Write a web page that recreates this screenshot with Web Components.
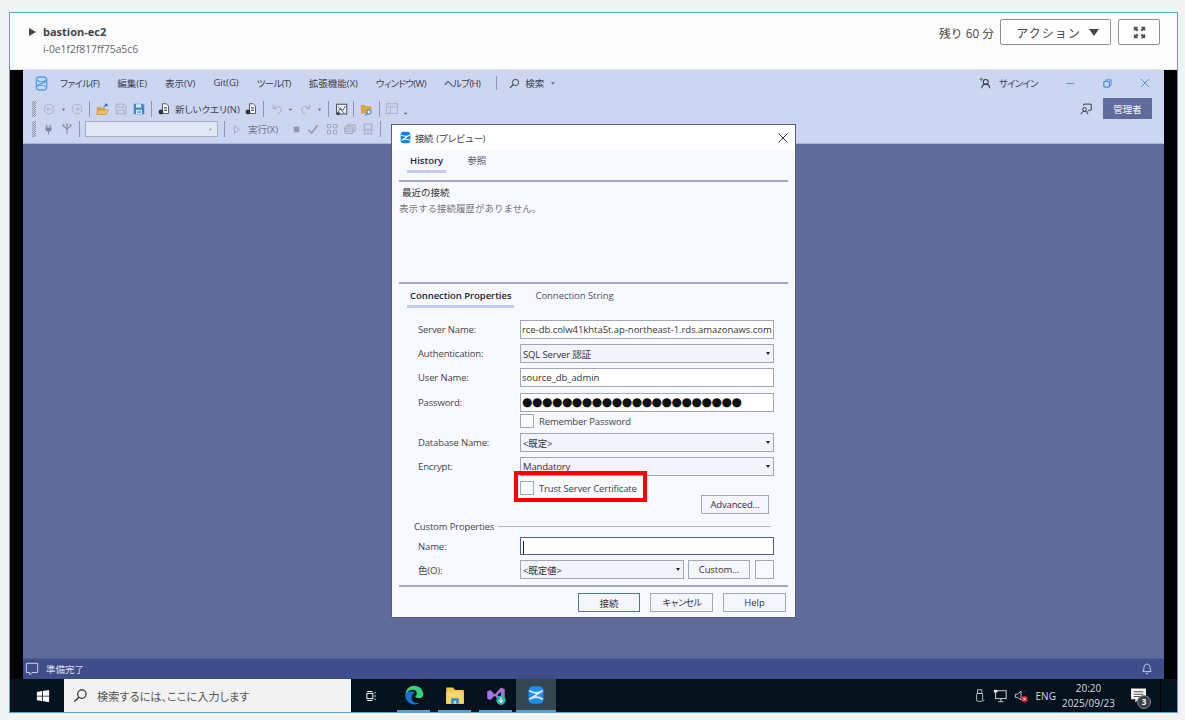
<!DOCTYPE html>
<html lang="ja">
<head>
<meta charset="utf-8">
<title>bastion-ec2</title>
<style>
  html, body { margin: 0; height: 720px; overflow: hidden; background: #f2f4f4; }
  body { font-family: "Open Sans", "Noto Sans CJK JP", sans-serif; font-size: 9.5px; color: #333; font-feature-settings: "palt"; }
</style>
</head>
<body>
<session-frame>
  <session-header name="bastion-ec2" instance="i-0e1f2f817ff75a5c6" remaining="残り 60 分"></session-header>
  <remote-desktop>
    <ads-window>
      <connect-dialog></connect-dialog>
      <mark-box></mark-box>
    </ads-window>
    <win-taskbar slot="taskbar"></win-taskbar>
  </remote-desktop>
</session-frame>

<script>
// icons, all on a 16x16 box unless the tag says otherwise
const ICONS = {
  back: '<circle cx="8" cy="8" r="6.5" fill="none" stroke="#a6adc6" stroke-width="1.2"/><path d="M11.5 8H5M7.5 5.5 5 8l2.5 2.5" fill="none" stroke="#a6adc6" stroke-width="1.2"/>',
  forward: '<circle cx="8" cy="8" r="6.5" fill="none" stroke="#a6adc6" stroke-width="1.2"/><path d="M4.5 8H11M8.5 5.5 11 8l-2.500 2.500" fill="none" stroke="#a6adc6" stroke-width="1.2"/>',
  caret: '<path d="M4 6.500h8L8 11z" fill="#5b6174"/>',
  caretGray: '<path d="M4 6.500h8L8 11z" fill="#9aa0b4"/>',
  open: '<path d="M1 5h5l1 1.500h5V14H1z" fill="#d9a441"/><path d="M3 8.500h12L12.500 14H1z" fill="#eec06a" stroke="#c68f2c" stroke-width=".8"/><path d="M9 5.500 13.500 1.500M11 1.500h2.700v2.700" fill="none" stroke="#2f78c4" stroke-width="1.300"/>',
  save: '<path d="M1.500 1.500h11l2 2v11h-13z M4 1.500v4.500h7V1.500 M4 14.500V9.500h8v5" fill="none" stroke="#a8afc8" stroke-width="1.200"/>',
  saveAll: '<path d="M1 1h12l2 2v12H1z" fill="#3a8ac9"/><path d="M4 1.500h7v4.500H4z M4 9h8v5.500H4z" fill="#dfe9f6"/><path d="M5.500 11h5M5.500 12.800h5" stroke="#3a8ac9"/>',
  newQuery: '<path d="M6 1h5l3 3v10H6z" fill="#fff" stroke="#3a3f4c" stroke-width="1.100"/><path d="M8 6h4M8 8h4M8 10h4" stroke="#3a3f4c"/><ellipse cx="4" cy="12" rx="3.300" ry="3.300" fill="#30343f"/>',
  undo: '<path d="M3 2.500v5h5M3.500 7.500C6 3.500 13.500 4 13.500 9c0 2.500-2 4.500-5 5.500" fill="none" stroke="#a3aac4" stroke-width="1.300"/>',
  redo: '<path d="M13 2.500v5H8M12.500 7.500C10 3.500 2.500 4 2.500 9c0 2.500 2 4.500 5 5.500" fill="none" stroke="#a3aac4" stroke-width="1.300"/>',
  report: '<rect x="2" y="1.500" width="12.500" height="12" fill="#eef1fa" stroke="#333a48" stroke-width="1.100"/><path d="M4 11l3-4.500 2.500 2.500L13 3.500M3.500 4.500l8 8" fill="none" stroke="#333a48"/><circle cx="4" cy="13" r="2" fill="#333a48"/>',
  folderFind: '<path d="M1 2.500h5l1.300 1.500H14v9H1z" fill="#d9a441"/><circle cx="11" cy="11" r="2.600" fill="#eaf2fb" stroke="#2f78c4" stroke-width="1.200"/><path d="M9 13l-2.500 2.500" stroke="#2f78c4" stroke-width="1.400"/>',
  panel: '<rect x="1.500" y="2" width="13" height="11" fill="none" stroke="#a8afc8" stroke-width="1.100"/><path d="M1.500 5.500h13M6 5.500V13" stroke="#a8afc8"/>',
  plug: '<path d="M5.500 1v4M10.500 1v4" stroke="#7f87a0" stroke-width="1.500"/><path d="M3.500 5h9v3.500L10 11H6L3.500 8.500z" fill="#7f87a0"/><path d="M8 11v4" stroke="#7f87a0" stroke-width="1.500"/>',
  fork: '<path d="M8 15V8M8 8 3 4M8 8l5-4M8 8V3" fill="none" stroke="#8a91aa" stroke-width="1.500"/><circle cx="3" cy="3" r="1.500" fill="#8a91aa"/><circle cx="13" cy="3" r="1.500" fill="#8a91aa"/><circle cx="8" cy="2" r="1.500" fill="#8a91aa"/>',
  play: '<path d="M5 2.500 12 8l-7 5.500z" fill="none" stroke="#9aa1ba" stroke-width="1.200"/>',
  stop: '<rect x="4" y="4" width="8" height="8" fill="#8f96ae"/>',
  check: '<path d="M2 9l4 4.500L14 3" fill="none" stroke="#8f96ae" stroke-width="2"/>',
  plan: '<path d="M2 2h4.500v4.500H2zM10 2h4.500v4.500H10zM2 10h4.500v4.500H2zM10 10h4.500v4.500H10z" fill="none" stroke="#9aa1ba" stroke-width="1.200"/>',
  grid: '<rect x="1" y="5" width="11" height="9" rx="1" fill="none" stroke="#9aa1ba" stroke-width="1.200"/><path d="M4 5V2.500h11V11h-3M1 8h11M1 11h11" fill="none" stroke="#9aa1ba" stroke-width="1.200"/>',
  sheet: '<rect x="3" y="1.500" width="10" height="13" fill="none" stroke="#9aa1ba" stroke-width="1.200"/><path d="M3 8.500h10M6 11.500h4" stroke="#9aa1ba" stroke-width="1.200"/>',
  search: '<circle cx="9.500" cy="6.500" r="4.500" fill="none" stroke="#333" stroke-width="1.300"/><path d="M6.200 9.800 1.500 14.500" stroke="#333" stroke-width="1.500"/>',
  signIn: '<circle cx="9" cy="6.500" r="3.300" fill="none" stroke="#333a48" stroke-width="1.400"/><path d="M3.500 15c.5-3.500 2.500-5.500 5.500-5.500s5 2 5.500 5.500" fill="none" stroke="#333a48" stroke-width="1.400"/><path d="M3 .500v5M.500 3h5" stroke="#3f9a52" stroke-width="1.400"/>',
  minimize: '<path d="M1 8h14" stroke="#4a94d8" stroke-width="1.800"/>',
  restore: '<rect x="1.500" y="4.500" width="10" height="10" rx="1" fill="none" stroke="#3c8fdc" stroke-width="2"/><path d="M5 4V1.500h9.500V11H12" fill="none" stroke="#3c8fdc" stroke-width="1.600"/>',
  close: '<path d="M1.500 1.500l13 13M14.500 1.500l-13 13" stroke="#4a94d8" stroke-width="1.500"/>',
  closeDark: '<path d="M2 2l12 12M14 2 2 14" stroke="#333" stroke-width="1.300"/>',
  feedback: '<circle cx="6" cy="8.500" r="2.500" fill="none" stroke="#333a48" stroke-width="1.300"/><path d="M1.500 15c.4-2.500 2-3.800 4.500-3.800s4.100 1.300 4.500 3.800M5 3.500V1.500h10v8h-3l-2 2" fill="none" stroke="#333a48" stroke-width="1.300"/>',
  expand: '<path d="M1 1h5.500L5 2.800 6.800 4.600 4.600 6.800 2.800 5 1 6.500zM15 1v5.500L13.200 5l-1.800 1.800-2.200-2.200L11 2.800 9.500 1zM1 15V9.500L2.800 11l1.800-1.800 2.200 2.200L5 13.200 6.500 15zM15 15H9.500L11 13.200l-1.800-1.800 2.200-2.200 1.800 1.800L15 9.500z" fill="#555"/>',
  comment: '<path d="M1.500 1.500h13v10.500H8L5.500 14.500V12h-4z" fill="none" stroke="#dbe0f2" stroke-width="1"/>',
  bell: '<path d="M8 1.500c-2.800 0-4 2-4 4.500 0 3-1.500 5-1.500 5.500h11C13.500 11 12 9 12 6c0-2.500-1.200-4.500-4-4.500zM6.500 13.500c.4 1 2.600 1 3 0" fill="none" stroke="#e4e8f6" stroke-width="1.100"/>',
  logoLine: '<rect x="2.500" y="1" width="11" height="14" rx="3.500" fill="none" stroke="#56a0e6" stroke-width="1.500"/><path d="M3 4.500C6 6.500 10 6.500 13 4.500M3 11.500C6 9.500 10 9.500 13 11.500M3.500 10 12.500 6" fill="none" stroke="#56a0e6" stroke-width="1.200"/>',
  logoFill: '<rect x="2" y="1" width="12" height="14" rx="3.500" fill="#1583e6"/><path d="M2.500 4.800C6 6.800 10 6.800 13.500 4.800L3 11.500c3.500-1.800 7-1.800 10.500 0" fill="none" stroke="#fff" stroke-width="1.300"/>',
  start: '<path d="M1 3.300 6.800 2.400V7.600H1zM7.800 2.300 15 1.200V7.600H7.800zM1 8.600H6.800V13.700L1 12.800zM7.800 8.600H15V15L7.800 13.800z" fill="#fff"/>',
  taskView: '<path d="M3 2h7M3 14h7" stroke="#fff" stroke-width="1.300"/><rect x="2.500" y="4.500" width="8" height="7" fill="none" stroke="#fff" stroke-width="1.300"/><path d="M13.500 2.500v2M13.500 7v2M13.500 11.500v2" stroke="#fff" stroke-width="1.300"/>',
  edge: '<path d="M8 .500c4.500 0 7.500 3.200 7.500 7 0 1.800-1.500 3-3.500 3-2.500 0-3-1-3-1.500 1-.5 1.500-1.500 1-3C10 3.500 6 3 3.500 5 1.500 6.500 1 9 1.500 6 2 3 4.500.500 8 .500z" fill="#3ccf7a"/><path d="M1 8c0 4.500 3.500 7.500 7.500 7.500 1.500 0 3-.5 4-1.300-3 .8-6.500-.3-6.500-4 0-2 1.300-3.700 3-4.200C5.500 4.500 1 5 1 8z" fill="#1476d2"/>',
  explorer: '<path d="M1 2h5.500L8 4h7v11H1z" fill="#f3c94a"/><path d="M1 5.500h14V15H1z" fill="#f7d96b"/><path d="M5 15v-4.500h6V15h-2v-2.500H7V15z" fill="#2b87d8"/>',
  vs: '<path d="M1 5 3.500 4 7 7.500 12 2l3 1.300v9.400L12 14 7 8.500 3.500 12 1 11z" fill="#a276d9"/><path d="M12 5.500 9 8l3 2.500z" fill="#04141f"/><circle cx="12" cy="12.200" r="3.700" fill="#27b6a3"/><path d="M12 10v3.500M10.500 12.300 12 14l1.500-1.700" fill="none" stroke="#fff" stroke-width=".9"/>',
  ads: '<rect x="2" y="1" width="12" height="14" rx="3.500" fill="#1e8cf0"/><path d="M2.500 4.500C6 6.800 10 6.800 13.500 4.500L2.500 11.500C6 9.200 10 9.200 13.500 11.500" fill="none" stroke="#dff0ff" stroke-width="1.300"/>',
  usb: '<rect x="4.500" y="1" width="6" height="4" fill="none" stroke="#cfd3da"/><rect x="3.500" y="5" width="8" height="9" rx="1" fill="none" stroke="#cfd3da"/><path d="M12 14l2-1.500" stroke="#cfd3da"/>',
  network: '<rect x="3" y="2" width="12" height="9" fill="none" stroke="#e8e8e8"/><path d="M9 11v3M6 14.500h6" stroke="#e8e8e8"/><rect x="1" y="1" width="4" height="3" fill="#e8e8e8"/>',
  muted: '<path d="M1.500 6h2.500l4-3.500v10L4 9.500H1.500z" fill="none" stroke="#d6d8de"/><circle cx="12" cy="11.500" r="3.600" fill="#e0232e"/><path d="M10.500 10l3 3M13.500 10l-3 3" stroke="#fff"/>',
  note: '<path d="M1 1.500h14v10H8l-3 3v-3H1z" fill="#f5f5f5"/><path d="M3.500 4.500h9M3.500 6.800h9M3.500 9h6" stroke="#555"/>'
};

class UiIcon extends HTMLElement {
  connectedCallback() {
    const size = this.getAttribute('size') || 12;
    const w = this.getAttribute('w') || size;
    const name = this.getAttribute('name');
    this.attachShadow({ mode: 'open' }).innerHTML = `
      <style>:host { display: inline-flex; flex: none; width: ${w}px; height: ${size}px; } svg { display: block; }</style>
      <svg width="${w}" height="${size}" viewBox="0 0 16 16" preserveAspectRatio="none">${ICONS[name] || ''}</svg>`;
  }
}
customElements.define('ui-icon', UiIcon);

class SessionFrame extends HTMLElement {
  constructor() {
    super();
    this.attachShadow({ mode: 'open' }).innerHTML = `
      <style>
        :host {
          display: flex; flex-direction: column; box-sizing: border-box;
          width: 1169px; height: 701px; margin: 12px 0 0 9px;
          border: 1px solid #5aa4cc; background: #fff;
        }
      </style>
      <slot></slot>`;
  }
}
customElements.define('session-frame', SessionFrame);

class SessionHeader extends HTMLElement {
  connectedCallback() {
    this.attachShadow({ mode: 'open' }).innerHTML = `
      <style>
        :host { display: flex; align-items: flex-start; height: 56px; background: #fcfcfc; flex: none; }
        .arrow { width: 0; height: 0; margin: 15px 0 0 19px; border-left: 7px solid #444; border-top: 4px solid transparent; border-bottom: 4px solid transparent; }
        .names { margin: 11px 0 0 7px; }
        .name { font: 700 11px/16px "Open Sans", sans-serif; color: #444; }
        .id { font: 10.300px/14px "Open Sans", sans-serif; color: #666; margin-top: 2px; }
        .right { margin-left: auto; display: flex; align-items: center; margin-top: 6px; margin-right: 17px; }
        .left { font: 11.800px "Open Sans", "Noto Sans CJK JP", sans-serif; color: #444; margin-right: 6px; }
        button {
          box-sizing: border-box; height: 26px; background: #fff; border: 1px solid #8c9096; border-radius: 2px;
          font: 12px "Noto Sans CJK JP", sans-serif; color: #444; display: flex; align-items: center; justify-content: center; padding: 0;
        }
        .action { width: 111px; letter-spacing: 1px; gap: 8px; padding-left: 4px; }
        .action i { width: 0; height: 0; border-top: 7px solid #444; border-left: 5px solid transparent; border-right: 5px solid transparent; }
        .full { width: 42px; margin-left: 7px; }
      </style>
      <div class="arrow"></div>
      <div class="names">
        <div class="name">${this.getAttribute('name')}</div>
        <div class="id">${this.getAttribute('instance')}</div>
      </div>
      <div class="right">
        <span class="left">${this.getAttribute('remaining')}</span>
        <button class="action">アクション<i></i></button>
        <button class="full"><ui-icon name="expand" size="13"></ui-icon></button>
      </div>`;
  }
}
customElements.define('session-header', SessionHeader);

class RemoteDesktop extends HTMLElement {
  constructor() {
    super();
    this.attachShadow({ mode: 'open' }).innerHTML = `
      <style>
        :host { display: flex; flex-direction: column; flex: 1; background: #000; min-height: 0; border-top: 1px solid #e4e6ea; }
        .main { flex: 1; padding: 0 13px; min-height: 0; display: flex; }
      </style>
      <div class="main"><slot></slot></div>
      <slot name="taskbar"></slot>`;
  }
}
customElements.define('remote-desktop', RemoteDesktop);

class AdsToolbar extends HTMLElement {
  constructor() {
    super();
    this.attachShadow({ mode: 'open' }).innerHTML = `
      <style>
        :host { display: flex; align-items: center; height: 20px; padding-left: 9px; }
        .grip { width: 4px; height: 16px; flex: none; background: repeating-conic-gradient(#8a91ab 0 25%, transparent 0 50%) 0 0 / 2px 2px; }
      </style>
      <div class="grip"></div><slot></slot>`;
  }
}
customElements.define('ads-toolbar', AdsToolbar);

class TbSep extends HTMLElement {
  constructor() {
    super();
    this.attachShadow({ mode: 'open' }).innerHTML = `<style>:host { display: block; flex: none; width: 1px; height: 16px; background: #8f97b4; }</style>`;
  }
}
customElements.define('tb-sep', TbSep);

class AdsWindow extends HTMLElement {
  constructor() {
    super();
    this.attachShadow({ mode: 'open' }).innerHTML = `
      <style>
        :host { display: flex; flex-direction: column; flex: 1; position: relative; background: #5f6b9a; }
        header { background: #ccd6f0; height: 74px; flex: none; border-bottom: 1px solid #a9b4d6; box-sizing: border-box; color: #3a4052; }
        .top { display: flex; align-items: center; height: 26px; padding-left: 11px; }
        .menu { display: flex; gap: 18px; margin-left: 11px; white-space: nowrap; }
        .menu .k { letter-spacing: -.6px; }
        .find { display: flex; align-items: center; margin-left: 16px; gap: 5px; }
        .find::before { content: ""; width: 1px; height: 14px; background: #8f97b4; margin-right: 7px; }
        .win { margin-left: auto; display: flex; align-items: center; padding-right: 14px; }
        .win span { width: 40px; margin: 0 27px 0 8px; white-space: nowrap; letter-spacing: -.8px; }
        .win ui-icon + ui-icon { margin-left: 28px; }
        .admin-row { position: absolute; top: 28px; right: 12px; display: flex; align-items: center; gap: 11px; }
        .admin { width: 49px; height: 21px; background: #5f6b9a; color: #fff; display: flex; align-items: center; justify-content: center; }
        .tools { margin-top: 3px; }
        .t { color: #3a4052; white-space: nowrap; }
        .combo { flex: none; box-sizing: border-box; width: 133px; height: 16px; background: #e2e7f5; border: 1px solid #a8aec0; display: flex; align-items: center; justify-content: flex-end; padding-right: 3px; }
        main { flex: 1; }
        footer { flex: none; height: 21px; background: #3f4d8a; color: #d8dcef; display: flex; align-items: center; padding: 0 11px 0 2px; border-top: 1px solid #525f96; box-sizing: border-box; }
        footer span { margin-left: 7px; }
        footer ui-icon:last-child { margin-left: auto; }
      </style>
      <header>
        <div class="top">
          <ui-icon name="logoLine" size="15"></ui-icon>
          <nav class="menu"><span class="k">ファイル(F)</span><span>編集(E)</span><span>表示(V)</span><span>Git(G)</span><span class="k">ツール(T)</span><span>拡張機能(X)</span><span class="k">ウィンドウ(W)</span><span class="k">ヘルプ(H)</span></nav>
          <div class="find"><ui-icon name="search" size="11"></ui-icon><span>検索</span><ui-icon name="caret" size="8"></ui-icon></div>
          <div class="win">
            <ui-icon name="signIn" size="12"></ui-icon><span>サインイン</span>
            <ui-icon name="minimize" size="9"></ui-icon><ui-icon name="restore" size="9"></ui-icon><ui-icon name="close" size="10"></ui-icon>
          </div>
        </div>
        <div class="admin-row"><ui-icon name="feedback" size="12"></ui-icon><div class="admin">管理者</div></div>
        <ads-toolbar class="tools">
          <ui-icon name="back" style="margin-left:7px"></ui-icon>
          <ui-icon name="caret" size="7" style="margin-left:5px"></ui-icon>
          <ui-icon name="forward" style="margin-left:4px"></ui-icon>
          <tb-sep style="margin-left:6px"></tb-sep>
          <ui-icon name="open" size="13" style="margin-left:6px"></ui-icon>
          <ui-icon name="save" style="margin-left:6px"></ui-icon>
          <ui-icon name="saveAll" style="margin-left:6px"></ui-icon>
          <tb-sep style="margin-left:6px"></tb-sep>
          <ui-icon name="newQuery" style="margin-left:6px"></ui-icon>
          <span class="t" style="margin-left:5px;width:60px">新しいクエリ(N)</span>
          <ui-icon name="newQuery" style="margin-left:10px"></ui-icon>
          <tb-sep style="margin-left:6px"></tb-sep>
          <ui-icon name="undo" style="margin-left:7px"></ui-icon>
          <ui-icon name="caret" size="7" style="margin-left:4px"></ui-icon>
          <ui-icon name="redo" style="margin-left:6px"></ui-icon>
          <ui-icon name="caret" size="7" style="margin-left:4px"></ui-icon>
          <tb-sep style="margin-left:5px"></tb-sep>
          <ui-icon name="report" size="13" style="margin-left:6px"></ui-icon>
          <tb-sep style="margin-left:5px"></tb-sep>
          <ui-icon name="folderFind" size="13" style="margin-left:6px"></ui-icon>
          <tb-sep style="margin-left:6px"></tb-sep>
          <ui-icon name="panel" size="14" style="margin-left:5px"></ui-icon>
          <ui-icon name="caret" size="7" style="margin-left:3px;margin-top:8px"></ui-icon>
        </ads-toolbar>
        <ads-toolbar>
          <ui-icon name="plug" size="11" style="margin-left:7px"></ui-icon>
          <ui-icon name="fork" size="12" style="margin-left:7px"></ui-icon>
          <tb-sep style="margin-left:6px"></tb-sep>
          <div class="combo" style="margin-left:5px"><ui-icon name="caretGray" size="7"></ui-icon></div>
          <tb-sep style="margin-left:6px"></tb-sep>
          <ui-icon name="play" size="11" style="margin-left:6px"></ui-icon>
          <span class="t" style="margin-left:6px;color:#6c7288;width:33px">実行(X)</span>
          <ui-icon name="stop" size="11" style="margin-left:10px"></ui-icon>
          <ui-icon name="check" size="12" style="margin-left:5px"></ui-icon>
          <ui-icon name="plan" size="12" style="margin-left:7px"></ui-icon>
          <ui-icon name="grid" size="12" style="margin-left:6px"></ui-icon>
          <ui-icon name="sheet" size="12" style="margin-left:6px"></ui-icon>
          <tb-sep style="margin-left:6px"></tb-sep>
        </ads-toolbar>
      </header>
      <main><slot></slot></main>
      <footer><ui-icon name="comment" size="14"></ui-icon><span>準備完了</span><ui-icon name="bell" size="12"></ui-icon></footer>`;
  }
}
customElements.define('ads-window', AdsWindow);

class TabStrip extends HTMLElement {
  connectedCallback() {
    const tabs = this.getAttribute('tabs').split('|');
    this.attachShadow({ mode: 'open' }).innerHTML = `
      <style>
        :host { display: flex; gap: 18px; padding-left: 15px; flex: none; }
        div { box-sizing: border-box; padding: 0 3px; color: #4a4f5e; white-space: nowrap; line-height: 20px; }
        .on { color: #1f2430; font-weight: 600; border-bottom: 3px solid #c2caf2; height: 22px; }
      </style>
      ${tabs.map((t, i) => `<div class="${i === 0 ? 'on' : ''}">${t}</div>`).join('')}`;
  }
}
customElements.define('tab-strip', TabStrip);

class FormRow extends HTMLElement {
  connectedCallback() {
    this.attachShadow({ mode: 'open' }).innerHTML = `
      <style>
        :host { display: grid; grid-template-columns: 102px 254px; align-items: center; padding-left: 26px; }
        label { color: #444; white-space: nowrap; }
      </style>
      <label>${this.getAttribute('label') || ''}</label><slot></slot>`;
  }
}
customElements.define('form-row', FormRow);

class TextField extends HTMLElement {
  connectedCallback() {
    this.attachShadow({ mode: 'open' }).innerHTML = `
      <style>
        :host { display: block; box-sizing: border-box; height: 19px; border: 1px solid #a3a7b5; background: #fff; overflow: hidden; }
        :host([kind="focus"]) { border-color: #4f5f96; height: 18px; }
        .v { display: block; padding-left: 1px; line-height: 17px; color: #333; white-space: nowrap; letter-spacing: -.04px; }
        :host([kind="dots"]) .v { font: 12px/16px "DejaVu Sans", sans-serif; color: #111; letter-spacing: -.500px; }
        :host([kind="focus"]) .v::before { content: ""; display: inline-block; width: 1px; height: 13px; background: #222; vertical-align: middle; margin-left: 1px; }
      </style>
      <span class="v">${this.getAttribute('value') || ''}</span>`;
  }
}
customElements.define('text-field', TextField);

class DropDown extends HTMLElement {
  connectedCallback() {
    this.attachShadow({ mode: 'open' }).innerHTML = `
      <style>
        :host { display: flex; align-items: center; box-sizing: border-box; height: 19px; border: 1px solid #a3a7b5; background: #f1f4fb; padding: 0 3px 0 2px; }
        span { flex: 1; color: #333; white-space: nowrap; }
        i { width: 0; height: 0; border-top: 3px solid #222; border-left: 2.500px solid transparent; border-right: 2.500px solid transparent; }
      </style>
      <span>${this.getAttribute('value') || ''}</span><i></i>`;
  }
}
customElements.define('drop-down', DropDown);

class CheckBox extends HTMLElement {
  connectedCallback() {
    this.attachShadow({ mode: 'open' }).innerHTML = `
      <style>
        :host { display: flex; align-items: center; gap: 5px; color: #444; white-space: nowrap; }
        i { box-sizing: border-box; width: 14px; height: 14px; border: 1px solid #a3a7b5; background: #fbfcff; }
      </style>
      <i></i><span>${this.getAttribute('label')}</span>`;
  }
}
customElements.define('check-box', CheckBox);

class DlgButton extends HTMLElement {
  connectedCallback() {
    this.attachShadow({ mode: 'open' }).innerHTML = `
      <style>
        :host { display: flex; align-items: center; justify-content: center; box-sizing: border-box; height: 19px; border: 1px solid #a3a7b5; background: #f4f6fc; color: #333; flex: none; white-space: nowrap; }
        :host([primary]) { border-color: #4a78a8; }
      </style>
      <slot></slot>`;
  }
}
customElements.define('dlg-button', DlgButton);

class ConnectDialog extends HTMLElement {
  constructor() {
    super();
    this.attachShadow({ mode: 'open' }).innerHTML = `
      <style>
        /* a window lying over the app, so it keeps its own place */
        :host {
          position: absolute; left: 368px; top: 54px; width: 405px; height: 494px; box-sizing: border-box;
          display: flex; flex-direction: column; background: #f8f9fe; border: 1px solid #555e80;
          font: 9.500px "Open Sans", "Noto Sans CJK JP", sans-serif; color: #333;
        }
        .title { height: 25px; flex: none; background: #fff; display: flex; align-items: center; padding: 0 6px 0 7px; color: #3a3f4c; }
        .title span { margin-left: 3px; letter-spacing: -.7px; word-spacing: 2px; }
        .title ui-icon:last-child { margin-left: auto; }
        .rule { flex: none; height: 2px; margin: 0 7px; background: #a3a9bf; }
        .recent { height: 100px; flex: none; box-sizing: border-box; padding: 3px 7px 0; line-height: 16px; }
        .recent b { display: block; font-weight: 400; color: #333; margin-left: 3px; }
        .recent p { margin: 0; color: #777; }
        .form { display: flex; flex-direction: column; padding-top: 12px; letter-spacing: -.15px; }
        .tabs1 { margin-top: 1px; height: 29px; }
        .tabs2 { margin-top: 2px; height: 22px; letter-spacing: -.05px; }
        .gap5 { margin-top: 5px; }
        .adv { display: flex; justify-content: flex-end; padding-right: 26px; }
        .legend { display: flex; align-items: center; gap: 4px; padding-left: 22px; padding-right: 24px; margin-top: 5px; height: 14px; color: #444; }
        .legend::after { content: ""; flex: 1; height: 1px; background: #b4b8c6; }
        .color { display: flex; gap: 4px; }
        .color drop-down { flex: none; width: 164px; }
        .swatch { box-sizing: border-box; width: 20px; height: 19px; border: 1px solid #a3a7b5; background: #f8f9fe; margin-left: 1px; }
        .actions { display: flex; justify-content: flex-end; gap: 10px; padding: 6px 9px 0 0; }
        .narrow { font-size: 9px; letter-spacing: -1.300px; }
      </style>
      <div class="title"><ui-icon name="logoFill" size="13"></ui-icon><span>接続 (プレビュー)</span><ui-icon name="closeDark" size="12"></ui-icon></div>
      <tab-strip class="tabs1" tabs="History|参照"></tab-strip>
      <div class="rule"></div>
      <div class="recent"><b>最近の接続</b><p>表示する接続履歴がありません。</p></div>
      <div class="rule"></div>
      <tab-strip class="tabs2" tabs="Connection Properties|Connection String"></tab-strip>
      <div class="form">
        <form-row label="Server Name:"><text-field value="rce-db.colw41khta5t.ap-northeast-1.rds.amazonaws.com"></text-field></form-row>
        <form-row label="Authentication:" class="gap5"><drop-down value="SQL Server 認証"></drop-down></form-row>
        <form-row label="User Name:" class="gap5"><text-field value="source_db_admin"></text-field></form-row>
        <form-row label="Password:" style="margin-top:6px"><text-field kind="dots" value="●●●●●●●●●●●●●●●●●●●●●●"></text-field></form-row>
        <form-row style="margin-top:2px"><check-box label="Remember Password"></check-box></form-row>
        <form-row label="Database Name:" class="gap5"><drop-down value="&lt;既定&gt;"></drop-down></form-row>
        <form-row label="Encrypt:" class="gap5"><drop-down value="Mandatory"></drop-down></form-row>
        <form-row class="gap5" style="height:14px"><check-box label="Trust Server Certificate"></check-box></form-row>
        <div class="adv"><dlg-button style="width:68px">Advanced...</dlg-button></div>
        <div class="legend">Custom Properties</div>
        <form-row label="Name:" style="margin-top:4px"><text-field kind="focus"></text-field></form-row>
        <form-row label="色(O):" class="gap5">
          <div class="color"><drop-down value="&lt;既定値&gt;"></drop-down><dlg-button style="width:62px">Custom...</dlg-button><div class="swatch"></div></div>
        </form-row>
      </div>
      <div class="rule" style="margin-top:6px"></div>
      <div class="actions">
        <dlg-button primary style="width:62px">接続</dlg-button>
        <dlg-button class="narrow" style="width:63px">キャンセル</dlg-button>
        <dlg-button style="width:63px">Help</dlg-button>
      </div>`;
  }
}
customElements.define('connect-dialog', ConnectDialog);

// red call-out drawn over the dialog
class MarkBox extends HTMLElement {
  constructor() {
    super();
    this.attachShadow({ mode: 'open' }).innerHTML = `
      <style>:host { position: absolute; left: 491px; top: 401px; width: 133px; height: 31px; box-sizing: border-box; border: 4px solid #f00; }</style>`;
  }
}
customElements.define('mark-box', MarkBox);

class TaskApp extends HTMLElement {
  connectedCallback() {
    const active = this.hasAttribute('active');
    this.attachShadow({ mode: 'open' }).innerHTML = `
      <style>
        :host { display: flex; align-items: center; justify-content: center; flex: none; box-sizing: border-box; height: 33px; width: ${this.getAttribute('w') || 33}px; border-bottom: 2px solid #5a9fd0; padding-top: 1px; ${active ? 'background:#34464f;' : ''} }
      </style>
      <ui-icon name="${this.getAttribute('name')}" size="20"></ui-icon>`;
  }
}
customElements.define('task-app', TaskApp);

class WinTaskbar extends HTMLElement {
  constructor() {
    super();
    this.attachShadow({ mode: 'open' }).innerHTML = `
      <style>
        :host { display: flex; flex: none; height: 33px; align-items: center; background: #03121c; color: #d8dbe0; font-size: 10px; }
        .start { width: 54px; flex: none; display: flex; justify-content: flex-end; padding-right: 14px; box-sizing: border-box; }
        .box { width: 287px; height: 33px; flex: none; background: #f2f2f2; display: flex; align-items: center; padding-left: 9px; box-sizing: border-box; color: #555; font-size: 11.200px; gap: 9px; }
        .view { margin-left: 14px; flex: none; }
        .apps { display: flex; gap: 8px; margin-left: 20px; }
        .apps task-app:last-child { margin-left: -4px; }
        .tray { margin-left: auto; display: flex; align-items: center; align-self: stretch; position: relative; }
        .tray ui-icon { margin-right: 7px; }
        .clock { text-align: center; line-height: 15px; margin-left: 6px; margin-right: 15px; }
        .note { position: relative; display: flex; }
        .note ui-icon { margin: 0; }
        /* unread badge over the notification icon */
        .note b { position: absolute; right: -4px; bottom: -5px; width: 12px; height: 12px; border-radius: 50%; background: #3c3f44; border: 1px solid #888; font: 700 8px/12px "Open Sans", sans-serif; text-align: center; color: #fff; }
        .edge { width: 1px; align-self: stretch; background: #000; margin: 0 16px 0 13px; }
      </style>
      <div class="start"><ui-icon name="start" size="14"></ui-icon></div>
      <div class="box"><ui-icon name="search" size="15"></ui-icon><span>検索するには、ここに入力します</span></div>
      <ui-icon class="view" name="taskView" size="12"></ui-icon>
      <div class="apps">
        <task-app name="edge"></task-app>
        <task-app name="explorer"></task-app>
        <task-app name="vs"></task-app>
        <task-app name="ads" w="40" active></task-app>
      </div>
      <div class="tray">
        <ui-icon name="usb" size="14" w="12"></ui-icon>
        <ui-icon name="network" size="14"></ui-icon>
        <ui-icon name="muted" size="14"></ui-icon>
        <span style="margin-left:1px">ENG</span>
        <div class="clock"><div>20:20</div><div>2025/09/23</div></div>
        <div class="note"><ui-icon name="note" size="17"></ui-icon><b>3</b></div>
        <div class="edge"></div>
      </div>`;
  }
}
customElements.define('win-taskbar', WinTaskbar);
</script>
</body>
</html>
